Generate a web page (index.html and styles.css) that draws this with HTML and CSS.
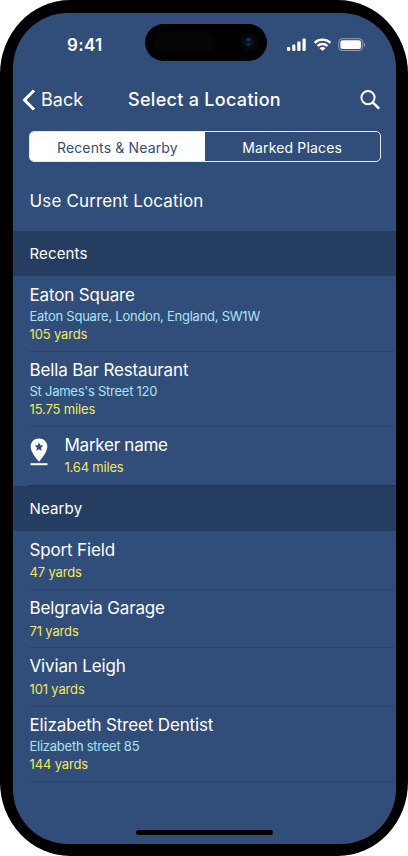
FILE: index.html
```html
<!DOCTYPE html>
<html lang="en">
<head>
<meta charset="utf-8">
<title>Select a Location</title>
<link rel="stylesheet" href="styles.css">
</head>
<body>
<div class="phone">
<div class="screen">
  <div class="status">
    <span class="time">9:41</span>
    <div class="island"><svg width="122" height="37" viewBox="0 0 122 37"><rect x="8" y="8" width="63" height="20" rx="10" fill="#050505"/><circle cx="103.500" cy="18" r="9.500" fill="#060708"/><circle cx="103.500" cy="18" r="5" fill="#071323"/><circle cx="103.500" cy="15.800" r="1.800" fill="#163a60"/><circle cx="103.500" cy="20.500" r="1.700" fill="#102c4c"/></svg></div>
    <svg class="signals" width="80" height="14" viewBox="0 0 80 14">
      <g fill="#fff">
        <rect x="0" y="9" width="3.200" height="4" rx="1"/><rect x="5.200" y="6.500" width="3.200" height="6.500" rx="1"/><rect x="10.300" y="3.500" width="3.200" height="9.500" rx="1"/><rect x="15.500" y="0.500" width="3.200" height="12.500" rx="1"/>
        <path d="M35.500 9.100c-1.200 0-2.200.4-3 1.100l3 2.900 3-2.900c-.8-.7-1.800-1.100-3-1.100z"/>
      </g>
      <g fill="none" stroke="#fff" stroke-width="2.400"><path d="M27.600 4.800a11.500 11.500 0 0 1 15.800 0"/><path d="M30.500 8a7.200 7.200 0 0 1 10 0"/></g>
      <rect x="51.700" y=".7" width="24" height="11.800" rx="3.600" fill="none" stroke="#fff" stroke-opacity=".45"/>
      <rect x="53.300" y="2.200" width="20.800" height="8.800" rx="2.300" fill="#fff"/>
      <path d="M77 4.700v4c1.500-.6 1.500-3.400 0-4z" fill="#fff" opacity=".5"/>
    </svg>
  </div>
  <div class="nav">
    <span class="back"><svg width="14" height="22" viewBox="0 0 14 22"><path d="M12 1.500 2.500 11 12 20.500" fill="none" stroke="#fff" stroke-width="3"/></svg><span class="back-text">Back</span></span>
    <span class="heading">Select a Location</span>
    <svg class="search" width="20" height="20" viewBox="0 0 20 20" fill="none" stroke="#fff"><circle cx="8" cy="7.600" r="6.600" stroke-width="2"/><path d="m12.700 12.300 6.400 6.400" stroke-width="2.600"/></svg>
  </div>
  <div class="tabs"><div class="tab active"><span class="t1">Recents &amp; Nearby</span></div><div class="tab"><span class="t2">Marked Places</span></div></div>
  <div class="current"><span>Use Current Location</span></div>
  <div class="section">Recents</div>
  <div class="row tall"><span class="name">Eaton Square</span><span class="address">Eaton Square, London, England, SW1W</span><span class="distance">105 yards</span></div>
  <div class="row tall"><span class="name">Bella Bar Restaurant</span><span class="address">St James's Street 120</span><span class="distance">15.75 miles</span></div>
  <div class="row marker">
    <svg width="18" height="28" viewBox="0 0 18 28"><path fill="#fff" fill-rule="evenodd" d="M9 .5C4.300.5.700 4 .700 8.500c0 5.500 5.200 11.700 8.300 15.200 3.100-3.500 8.300-9.700 8.300-15.200C17.300 4 13.700.5 9 .5zm0 3.900 1.300 2.900 3.100.3-2.400 2.100.7 3.100L9 11.200l-2.700 1.600.7-3.100-2.400-2.100 3.100-.3z"/><path fill="#fff" d="M.5 25.200h17v2H.5z"/></svg>
    <div class="details"><span class="name">Marker name</span><span class="distance">1.64 miles</span></div>
  </div>
  <div class="section">Nearby</div>
  <div class="row"><span class="name">Sport Field</span><span class="distance">47 yards</span></div>
  <div class="row"><span class="name">Belgravia Garage</span><span class="distance">71 yards</span></div>
  <div class="row"><span class="name">Vivian Leigh</span><span class="distance">101 yards</span></div>
  <div class="row tall"><span class="name">Elizabeth Street Dentist</span><span class="address">Elizabeth street 85</span><span class="distance">144 yards</span></div>
  <div class="home"></div>
</div>
</div>
</body>
</html>
```
FILE: styles.css
```css
* { box-sizing: border-box; }
body { margin: 0; background: #fff; font-family: Inter, "Liberation Sans", sans-serif; color: #fff; }
.phone { width: 408px; height: 856px; padding: 13px 12px 12px 13px; background: #000; border-radius: 70px / 74px; }
.screen { width: 383px; height: 831px; background: #304e79; border-radius: 55px; overflow: hidden; display: flex; flex-direction: column; white-space: nowrap; }
.screen svg { display: block; flex: none; }
.status { height: 61px; display: flex; align-items: flex-start; padding-top: 11px; flex: none; }
.time { width: 131.500px; padding: 11px 0 0 54px; font-size: 17px; line-height: 21px; font-weight: 600; letter-spacing: .3px; }
.island { width: 122px; height: 37px; background: #000; border-radius: 19px; }
.signals { margin: 14px 0 0 20px; }
.nav { height: 52px; display: flex; align-items: center; padding: 0 16px 0 9px; flex: none; }
.back { width: 106px; display: flex; align-items: center; gap: 5px; font-size: 18px; line-height: 26px; }
.heading { flex: 1; font-size: 18px; line-height: 26px; font-weight: 500; letter-spacing: .3px; }
.tabs { height: 31px; margin: 5px 15.500px 0 16px; flex: none; display: flex; border: 1px solid #e4e9f0; border-radius: 5px; overflow: hidden; }
.tab { flex: 1; display: flex; align-items: center; justify-content: center; padding-top: 1px; font-size: 14px; letter-spacing: .15px; }
.active { background: #fff; color: #304e79; }
.current { height: 69px; padding: 9px 16px 0 16.500px; display: flex; align-items: center; font-size: 17px; letter-spacing: .15px; flex: none; }
.section { height: 45px; flex: none; background: #263d62; padding: 0 16.500px; font-size: 15px; line-height: 46px; letter-spacing: .15px; }
.row { height: 58.500px; flex: none; margin-left: 16px; padding-left: .5px; border-bottom: 1px solid #29456c; display: flex; flex-direction: column; padding-top: 7px; letter-spacing: -.15px; }
.tall { height: 75px; }
.section + .tall { height: 76px; padding-top: 8px; }
.name { font-size: 17px; line-height: 22px; }
.address { font-size: 13px; line-height: 20px; color: #a9e3f5; letter-spacing: -.25px; }
.distance { font-size: 13px; line-height: 17px; color: #f3e85b; }
.row:not(.tall) .distance { margin-top: 4px; }
.marker { height: 58.500px; flex-direction: row; gap: 17px; letter-spacing: -.25px; border-bottom-color: #20365a; }
.marker svg { margin: 4px 0 0; }
.marker .distance { letter-spacing: -.2px; }
.row.marker .distance { margin-top: 3px; }
.details { display: flex; flex-direction: column; }
.marker + .section + .row { height: 59px; padding-top: 8px; }
.marker + .section + .row .distance { margin-top: 3px; }
.home { width: 137px; height: 5px; border-radius: 3px; background: #000; margin: auto auto 9px; flex: none; }
```
